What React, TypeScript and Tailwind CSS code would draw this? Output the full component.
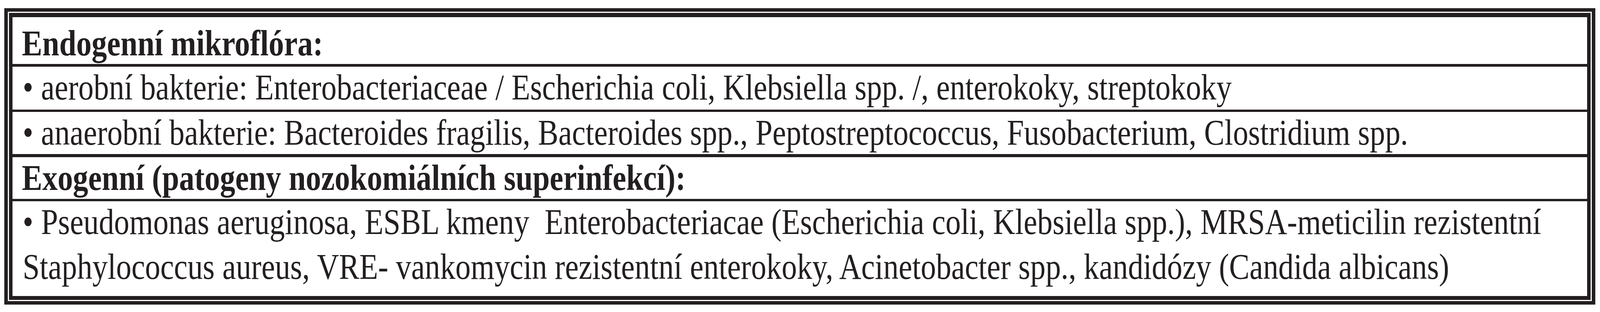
import React from "react";

function useScale() {
  const get = () =>
    typeof window === "undefined" ? 1 : Math.min(1, document.documentElement.clientWidth / 4916);
  const [s, setS] = React.useState(get);
  React.useEffect(() => {
    const on = () => setS(get());
    window.addEventListener("resize", on);
    return () => window.removeEventListener("resize", on);
  }, []);
  return s;
}

function Line({ s, children, bold }: { s: number; children: React.ReactNode; bold?: boolean }) {
  return (
    <span
      className={"inline-block whitespace-nowrap origin-left" + (bold ? " font-bold" : "")}
      style={{ transform: `scaleX(${s})` }}
    >
      {children}
    </span>
  );
}

export default function App() {
  const s = useScale();
  return (
    <div
      className="w-full h-[800px] bg-white pt-[21px] pl-[0.264%] pr-[0.285%]"
      style={{ fontFamily: '"Liberation Serif", "Times New Roman", serif' }}
    >
      <div className="border-[9px] border-t-[9px] border-b-[9px] border-[#231f20] p-[3px] bg-white">
        <div className="border-[9px] border-t-[11px] border-b-[10px] border-[#231f20] bg-white text-[94px] text-[#231f20] overflow-hidden">
          <div className="box-content h-[108px] border-b-[7px] border-[#231f20] pl-[0.6%] pt-[12px] leading-[108px]">
            <Line s={s} bold>Endogenní mikroflóra:</Line>
          </div>
          <div className="h-[110px] box-content border-b-[6px] border-[#231f20] pl-[0.66%] leading-[104px]">
            <Line s={s}>• aerobní bakterie: Enterobacteriaceae / Escherichia coli, Klebsiella spp. /, enterokoky, streptokoky</Line>
          </div>
          <div className="h-[108px] box-content border-b-[8px] border-[#231f20] pl-[0.66%] leading-[104px]">
            <Line s={s}>• anaerobní bakterie: Bacteroides fragilis, Bacteroides spp., Peptostreptococcus, Fusobacterium, Clostridium spp.</Line>
          </div>
          <div className="h-[107px] box-content border-b-[6px] border-[#231f20] pl-[0.6%] leading-[104px]">
            <Line s={s} bold>Exogenní (patogeny nozokomiálních superinfekcí):</Line>
          </div>
          <div className="h-[243px] flex flex-col pl-[0.66%]">
            <div className="-mt-[5px] leading-[115px] flex flex-col items-start">
              <Line s={s}>• Pseudomonas aeruginosa, ESBL kmeny{"\u00a0 "}Enterobacteriacae (Escherichia coli, Klebsiella spp.), MRSA-meticilin rezistentní</Line>
              <Line s={s}>Staphylococcus aureus, VRE- vankomycin rezistentní enterokoky, Acinetobacter spp., kandidózy (Candida albicans)</Line>
            </div>
          </div>
        </div>
      </div>
    </div>
  );
}
